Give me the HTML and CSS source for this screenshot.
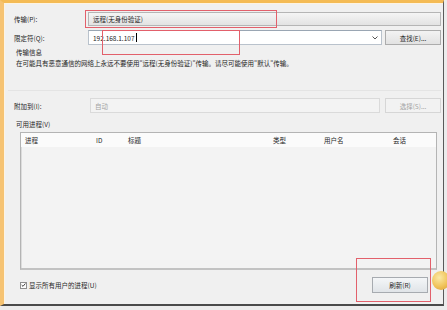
FILE: index.html
```html
<!DOCTYPE html>
<html lang="zh-CN">
<head>
    <meta charset="UTF-8">
    <meta name="viewport" content="width=device-width, initial-scale=1.0">
    <title>附加到进程</title>
    <link rel="stylesheet" href="styles.css">
</head>
<body>
    <div class="window">
        <div class="row row-transport">
            <span class="label">传输(P):</span>
            <div class="combo">远程(无身份验证)</div>
        </div>
        <div class="row row-qualifier">
            <span class="label">限定符(Q):</span>
            <div class="input">
                <span class="value">192.168.1.107</span><span class="caret"></span>
                <svg class="arrow" width="6" height="4" viewBox="0 0 6 4"><path d="M0.5 0.5 L3 3 L5.5 0.5" fill="none" stroke="#555" stroke-width="1"/></svg>
            </div>
            <button class="btn">查找(E)...</button>
        </div>
        <div class="info-title">传输信息</div>
        <div class="info-text">在可能具有恶意通信的网络上永远不要使用"远程(无身份验证)"传输。请尽可能使用"默认"传输。</div>
        <div class="sep"></div>
        <div class="row row-attach">
            <span class="label">附加到(I):</span>
            <div class="field disabled">自动</div>
            <button class="btn disabled">选择(S)...</button>
        </div>
        <div class="group-title">可用进程(V)</div>
        <div class="list">
            <div class="list-head">
                <span class="col col-name">进程</span>
                <span class="col col-id">ID</span>
                <span class="col col-title">标题</span>
                <span class="col col-type">类型</span>
                <span class="col col-user">用户名</span>
                <span class="col col-session">会话</span>
            </div>
        </div>
        <div class="footer">
            <label class="check">
                <span class="box">
                    <svg width="6" height="6" viewBox="0 0 6 6"><path d="M0.8 3 L2.4 4.6 L5.3 1.2" fill="none" stroke="#333" stroke-width="1.1"/></svg>
                </span>
                显示所有用户的进程(U)
            </label>
            <button class="btn btn-refresh">刷新(R)</button>
        </div>

        <div class="mark mark-transport"></div>
        <div class="mark mark-qualifier"></div>
        <div class="mark mark-refresh"></div>
    </div>
    <div class="blob"></div>
</body>
</html>
```

FILE: styles.css
```css
body {
    margin: 0;
    width: 447px;
    height: 310px;
    overflow: hidden;
    position: relative;
    background-color: #ececec;
    font-family: "Noto Sans CJK SC", "Noto Sans", sans-serif;
    font-size: 6.5px;
    color: #1f1f1f;
}

.window {
    position: relative;
    box-sizing: border-box;
    width: 444px;
    height: 306px;
    padding: 9px 2px 0 10px;
    display: flex;
    flex-direction: column;
    background-color: #f0f0f0;
    border-top: 3px solid #f4bb55;
    border-left: 4px solid #f6c372;
    border-right: 1px solid #5a5a5a;
    border-bottom: 2px solid #4a4a4a;
    box-shadow: inset 1px 1px 0 #fdf3e2;
}

.row {
    display: flex;
    align-items: center;
}

.label {
    width: 74px;
    flex: none;
}

.row-transport {
    height: 14px;
}

.combo {
    flex: 1;
    height: 14px;
    box-sizing: border-box;
    padding-left: 4px;
    display: flex;
    align-items: center;
    border: 1px solid #b5b5b5;
    background: linear-gradient(#f5f5f5, #e3e3e3);
}

.row-qualifier {
    height: 15px;
    margin-top: 4px;
}

.input {
    flex: 1;
    height: 15px;
    box-sizing: border-box;
    margin-right: 3px;
    padding-left: 4px;
    display: flex;
    align-items: center;
    background-color: #ffffff;
    border: 1px solid #b9c2cc;
    border-top-color: #9aa6b3;
}

.value {
    color: #1e1e1e;
}

.caret {
    width: 1px;
    height: 9px;
    margin-left: 1px;
    background-color: #000000;
}

.arrow {
    margin-left: auto;
    margin-right: 3px;
}

.btn {
    width: 56px;
    height: 15px;
    box-sizing: border-box;
    padding: 0;
    font-family: inherit;
    font-size: 6.5px;
    color: #1f1f1f;
    border: 1px solid #acacac;
    border-radius: 0;
    background: linear-gradient(#f3f3f3, #e2e2e2);
}

.btn.disabled {
    color: #a3a3a3;
    border-color: #d6d6d6;
    background: #f2f2f2;
}

.info-title {
    margin: 3px 0 0 2px;
    height: 9px;
    line-height: 9px;
}

.info-text {
    margin: 2px 0 0 2px;
    height: 9px;
    line-height: 9px;
}

.sep {
    margin: 22px 0 0 -6px;
    border-top: 1px solid #e4e4e4;
}

.row-attach {
    height: 15px;
    margin-top: 7px;
}

.field {
    flex: 1;
    height: 15px;
    box-sizing: border-box;
    margin: 0 5px 0 2px;
    padding-left: 4px;
    display: flex;
    align-items: center;
}

.field.disabled {
    color: #a3a3a3;
    border: 1px solid #dadada;
    background-color: #f3f3f3;
}

.group-title {
    margin: 7px 0 0 2px;
    height: 8px;
    line-height: 8px;
}

.list {
    margin: 4px 4px 0 6px;
    height: 138px;
    box-sizing: border-box;
    border: 1px solid #b4b4b4;
    border-bottom: 2px solid #c2c2c2;
    background-color: #f3f3f3;
    box-shadow: inset 1px 0 0 #dcdcdc;
}

.list-head {
    height: 14px;
    padding-left: 4px;
    display: flex;
    align-items: center;
    background-color: #fbfbfb;
}

.col {
    flex: none;
}

.col-name { width: 71px; }
.col-id { width: 32px; }
.col-title { width: 145px; }
.col-type { width: 51px; }
.col-user { width: 69px; }

.footer {
    margin-top: 7px;
    height: 16px;
    display: flex;
    align-items: center;
    justify-content: space-between;
}

.check {
    margin-left: 6px;
    display: flex;
    align-items: center;
    gap: 2px;
}

.box {
    width: 7px;
    height: 7px;
    box-sizing: border-box;
    display: flex;
    align-items: center;
    justify-content: center;
    border: 1px solid #8f8f8f;
    background-color: #fdfdfd;
}

.btn-refresh {
    height: 16px;
    margin-right: 13px;
    border-color: #a7abb0;
    background: linear-gradient(#f4f6f8, #e0e4e8);
}

.mark {
    position: absolute;
    border: 1px solid #e2606b;
}

.mark-transport {
    left: 81px;
    top: 7px;
    width: 190px;
    height: 16px;
}

.mark-qualifier {
    left: 98px;
    top: 27px;
    width: 136px;
    height: 23px;
}

.mark-refresh {
    left: 352px;
    top: 255px;
    width: 73px;
    height: 42px;
}

.blob {
    position: absolute;
    left: 432px;
    top: 271px;
    width: 18px;
    height: 19px;
    border-radius: 50%;
    background: radial-gradient(circle at 40% 35%, #fbe9a6, #f0c35a 55%, #d99a34);
}
```
